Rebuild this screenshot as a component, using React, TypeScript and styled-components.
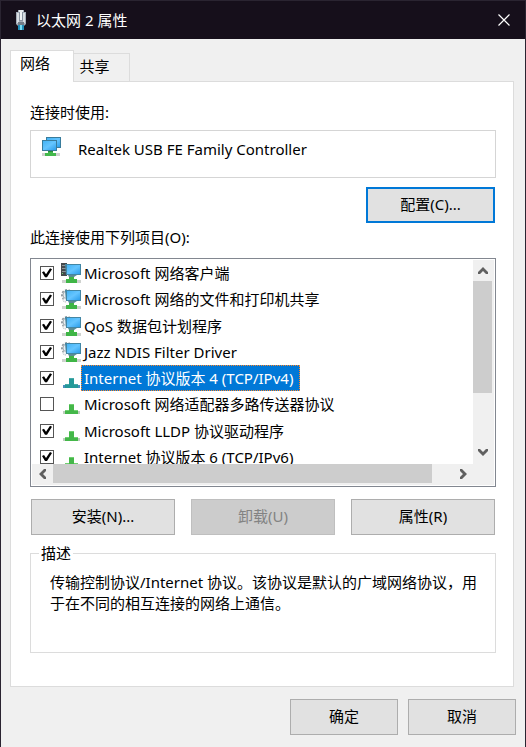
import { useState } from 'react';
import styled, { createGlobalStyle, css } from 'styled-components';

const GlobalStyle = createGlobalStyle`
  *, *::before, *::after { box-sizing: border-box; }
  body { margin: 0; background: #f0f0f0; }
  body, button, input {
    font-family: "Noto Sans", "Noto Sans CJK SC", sans-serif;
    font-size: 15px;
    line-height: 21px;
    color: #000;
  }
`;

const Dialog = styled.main`
  display: flex;
  flex-direction: column;
  min-height: 100vh;
  background: #f0f0f0;
  border: 1px solid #2a2431;
  border-width: 1px 1px 0;
`;

const TitleBar = styled.header`
  display: flex;
  align-items: center;
  height: 38px;
  padding-left: 13px;
  gap: 8px;
  background: #160f1b;
  color: #fff;
`;

const Title = styled.h1`
  flex: 1;
  margin: 0;
  font-size: 15px;
  font-weight: 400;
`;

const CloseButton = styled.button`
  display: flex;
  align-items: center;
  justify-content: center;
  width: 42px;
  height: 38px;
  padding: 0;
  border: 0;
  background: transparent;
`;

const Content = styled.div`
  flex: 1;
  display: flex;
  flex-direction: column;
  padding: 11px 9px 12px;
`;

const TabList = styled.div`
  display: flex;
  align-items: flex-end;
`;

const Tab = styled.button<{ $active: boolean }>`
  border: 1px solid #dcdcdc;
  padding: 0 0 3px;
  background: #f0f0f0;
  width: 56px;
  height: 28px;
  ${(p) =>
    p.$active
      ? css`
          width: 64px;
          height: 32px;
          margin-bottom: -1px;
          padding: 0 14px 6px 0;
          background: #fff;
          border-bottom: 0;
          z-index: 1;
        `
      : css`
          border-left: 0;
          border-bottom: 0;
          padding-right: 14px;
        `}
`;

const Panel = styled.section`
  flex: 1;
  display: flex;
  flex-direction: column;
  margin-right: 2px;
  padding: 20px 17px 33px 19px;
  background: #fff;
  border: 1px solid #dcdcdc;
`;

const Caption = styled.h2`
  margin: 0;
  font-size: 15px;
  font-weight: 400;
`;

const Adapter = styled.div`
  display: flex;
  align-items: flex-start;
  gap: 15px;
  height: 48px;
  margin-top: 7px;
  padding: 6px 10px;
  border: 1px solid #d5d5d5;
`;

const AdapterName = styled.span`
  padding-top: 2px;
`;

const PushButton = styled.button<{ $focused?: boolean }>`
  height: 36px;
  padding: 0 8px 2px;
  border: 1px solid #adadad;
  background: #e1e1e1;
  ${(p) => p.$focused && css`border: 2px solid #0078d7;`}
  &:disabled {
    border-color: #bfbfbf;
    background: #cccccc;
    color: #838383;
  }
`;

const ConfigureRow = styled.div`
  display: flex;
  justify-content: flex-end;
  margin: 9px 1px 4px 0;
  ${PushButton} { width: 129px; }
`;

const ListBox = styled.div`
  display: grid;
  grid-template-columns: 1fr 21px;
  grid-template-rows: 204px 21px;
  margin-top: 10px;
  padding: 1px;
  border: 1px solid #828790;
`;

const Items = styled.ul`
  display: grid;
  grid-auto-rows: 1fr;
  height: 210px;
  margin: 0;
  padding: 0 0 0 8px;
  list-style: none;
`;

const Viewport = styled.div`
  overflow: hidden;
`;

const Item = styled.li`
  display: flex;
  align-items: center;
`;

const ItemLabel = styled.label`
  display: flex;
  align-items: center;
`;

const CheckBox = styled.input`
  appearance: none;
  width: 14px;
  height: 14px;
  margin: 0 7px 0 0;
  border: 1px solid #555;
  background: #fff;
  &:checked::before {
    content: "";
    display: block;
    width: 12px;
    height: 12px;
    background: #000;
    clip-path: polygon(1px 5px, 3px 4px, 5px 7px, 9px 1px, 11px 2px, 6px 10px, 4px 10px);
  }
`;

const ItemText = styled.span<{ $selected: boolean }>`
  height: 26px;
  padding: 1px 6px 1px 2px;
  border: 1px dotted transparent;
  line-height: 22px;
  white-space: nowrap;
  ${(p) =>
    p.$selected &&
    css`
      background: #0078d7;
      border-color: #ff8728;
      color: #fff;
    `}
`;

const ScrollColumn = styled.div`
  display: flex;
  flex-direction: column;
  padding: 0 2px 2px 0;
  background: #f0f0f0;
`;

const ScrollRow = styled.div`
  grid-column: 1 / -1;
  display: flex;
  padding-right: 21px;
  padding-bottom: 2px;
  background: #f0f0f0;
`;

const ScrollButton = styled.button`
  display: flex;
  align-items: center;
  justify-content: center;
  flex: 0 0 21px;
  padding: 0;
  border: 0;
  background: #f0f0f0;
`;

const Track = styled.div<{ $vertical?: boolean }>`
  flex: 1;
  display: flex;
  flex-direction: ${(p) => (p.$vertical ? 'column' : 'row')};
`;

const Thumb = styled.div<{ $share: number }>`
  flex: 0 0 ${(p) => p.$share}%;
  background: #cdcdcd;
`;

const Actions = styled.div`
  display: grid;
  grid-template-columns: repeat(3, 1fr);
  gap: 16px;
  margin: 12px 1px 0;
`;

const Description = styled.fieldset`
  flex: 1;
  margin: 8px 0 0;
  padding: 8px 16px 30px 19px;
  border: 1px solid #dcdcdc;
  min-width: 0;
`;

const Legend = styled.legend`
  margin-left: -11px;
  padding: 0 2px;
`;

const DescriptionText = styled.p`
  margin: 0;
`;

const Footer = styled.footer`
  display: flex;
  justify-content: flex-end;
  gap: 10px;
  margin-top: 12px;
  ${PushButton} { width: 108px; }
`;

function PlugIcon() {
  return (
    <svg width="14" height="22" viewBox="0 0 14 22" aria-hidden="true">
      <path d="M4 1h6v2h2v12l-2 2H4l-2-2V3h2z" fill="#a4adb8" />
      <path d="M3 4h2v10H3zM9 4h2v10H9z" fill="#d8dde2" />
      <path d="M5 1h4v2H5z" fill="#e8ebee" />
      <path d="M5 3h4v9H5z" fill="#8993a0" />
      <path d="M6 3h2v8H6z" fill="#f1f4f6" />
      <path d="M4 13h6v3H4z" fill="#737d89" />
      <path d="M4 16h6v5H4z" fill="#218db8" />
      <path d="M6 16h2v5H6z" fill="#7bdcf3" />
    </svg>
  );
}

function AdapterIcon() {
  return (
    <svg width="22" height="21" viewBox="0 0 22 21" aria-hidden="true">
      <defs>
        <linearGradient id="screen" x1="0" y1="0" x2="1" y2="1">
          <stop offset="0" stopColor="#43b3f5" />
          <stop offset="0.5" stopColor="#65c5ff" />
          <stop offset="1" stopColor="#2c9eeb" />
        </linearGradient>
      </defs>
      <path d="M5 0h15v11H5z" fill="#397c9c" />
      <path d="M6 1h13v9H6z" fill="url(#screen)" />
      <path d="M1 16h18v3H1z" fill="#cfcfcf" />
      <path d="M7 13h5v3h3v3H4v-3h3z" fill="#43b84b" />
      <path d="M1 3h15v11H1z" fill="#397c9c" />
      <path d="M2 4h13v9H2z" fill="url(#screen)" />
      <path d="M7 14h5v1H7z" fill="#2a8c3c" />
    </svg>
  );
}

type IconKind = 'client' | 'service' | 'protocol';

function ItemIcon({ kind, selected }: { kind: IconKind; selected: boolean }) {
  if (kind === 'protocol') {
    return (
      <svg width="20" height="22" viewBox="0 0 20 22" aria-hidden="true">
        <path d="M2 18h17v3H2z" fill={selected ? '#4a8fbd' : '#bfcdbf'} />
        <path d="M8 11h5v6h4v4H4v-4h4z" fill={selected ? '#259999' : '#44b749'} />
        <path d="M8 11h5v1H8zM4 17h4v1H4zM13 17h4v1h-4z" fill={selected ? '#47aaa8' : '#70cf70'} />
      </svg>
    );
  }
  return (
    <svg width="20" height="22" viewBox="0 0 20 22" aria-hidden="true">
      {kind === 'client' ? (
        <>
          <path d="M0 1h6v13H0z" fill="#454a4d" />
          <path d="M1 3h4v1H1zM1 6h4v1H1zM1 9h4v1H1z" fill="#8d9497" />
          <path d="M1 11h1v1H1z" fill="#6bd36b" />
        </>
      ) : (
        <>
          <circle cx="6" cy="7" r="5" fill="#dce1e4" stroke="#8d979d" strokeWidth="2" strokeDasharray="2 1.5" />
          <circle cx="6" cy="7" r="4" fill="#e9edef" stroke="#a8b1b6" />
          <circle cx="4" cy="12" r="2" fill="#f4f5f6" stroke="#a0a9ae" strokeDasharray="1 1" />
        </>
      )}
      <path d="M1 18h19v3H1z" fill="#cfd2cf" />
      <path d="M8 13h5v4h3v4H5v-4h3z" fill="#3fb546" />
      <path d="M4 2h16v11H5z" fill="#4386a4" />
      <path d="M6 3h13v9H6z" fill="url(#screen)" />
      <path d="M7 13h9l-3 2H8z" fill="#5b8c94" />
    </svg>
  );
}

const arrows = {
  up: 'M1 8V6l5-5 5 5v2L9 8 6 5 3 8z',
  down: 'M1 2v2l5 5 5-5V2L9 2 6 5 3 2z',
  left: 'M9 0H7L2 5l5 5h2V8L6 5l3-3z',
  right: 'M3 0h2l5 5-5 5H3V8l3-3-3-3z',
};

function Arrow({ to }: { to: keyof typeof arrows }) {
  return (
    <svg width="12" height="10" viewBox="0 0 12 10" aria-hidden="true">
      <path d={arrows[to]} fill="#606060" />
    </svg>
  );
}

const initialItems: { name: string; kind: IconKind; checked: boolean }[] = [
  { name: 'Microsoft 网络客户端', kind: 'client', checked: true },
  { name: 'Microsoft 网络的文件和打印机共享', kind: 'service', checked: true },
  { name: 'QoS 数据包计划程序', kind: 'service', checked: true },
  { name: 'Jazz NDIS Filter Driver', kind: 'service', checked: true },
  { name: 'Internet 协议版本 4 (TCP/IPv4)', kind: 'protocol', checked: true },
  { name: 'Microsoft 网络适配器多路传送器协议', kind: 'protocol', checked: false },
  { name: 'Microsoft LLDP 协议驱动程序', kind: 'protocol', checked: true },
  { name: 'Internet 协议版本 6 (TCP/IPv6)', kind: 'protocol', checked: true },
];

export default function App() {
  const [items, setItems] = useState(initialItems);
  const [selected, setSelected] = useState(4);

  const toggle = (index: number) => {
    setItems(items.map((item, i) => (i === index ? { ...item, checked: !item.checked } : item)));
    setSelected(index);
  };

  return (
    <>
      <GlobalStyle />
      <Dialog>
        <TitleBar>
          <PlugIcon />
          <Title>以太网 2 属性</Title>
          <CloseButton aria-label="关闭">
            <svg width="12" height="12" viewBox="0 0 12 12" aria-hidden="true">
              <path d="M.5 .5l11 11M11.5 .5l-11 11" stroke="#fff" strokeWidth="1.2" />
            </svg>
          </CloseButton>
        </TitleBar>
        <Content>
          <TabList role="tablist">
            <Tab role="tab" aria-selected="true" $active>网络</Tab>
            <Tab role="tab" aria-selected="false" $active={false}>共享</Tab>
          </TabList>
          <Panel role="tabpanel">
            <Caption>连接时使用:</Caption>
            <Adapter>
              <AdapterIcon />
              <AdapterName>Realtek USB FE Family Controller</AdapterName>
            </Adapter>
            <ConfigureRow>
              <PushButton $focused>配置(C)...</PushButton>
            </ConfigureRow>
            <Caption>此连接使用下列项目(O):</Caption>
            <ListBox>
              <Viewport>
                <Items>
                  {items.map((item, i) => (
                    <Item key={item.name}>
                      <ItemLabel>
                        <CheckBox type="checkbox" checked={item.checked} onChange={() => toggle(i)} />
                        <ItemIcon kind={item.kind} selected={i === selected} />
                        <ItemText $selected={i === selected}>{item.name}</ItemText>
                      </ItemLabel>
                    </Item>
                  ))}
                </Items>
              </Viewport>
              <ScrollColumn>
                <ScrollButton aria-label="向上滚动"><Arrow to="up" /></ScrollButton>
                <Track $vertical><Thumb $share={70} /></Track>
                <ScrollButton aria-label="向下滚动"><Arrow to="down" /></ScrollButton>
              </ScrollColumn>
              <ScrollRow>
                <ScrollButton aria-label="向左滚动"><Arrow to="left" /></ScrollButton>
                <Track><Thumb $share={95} /></Track>
                <ScrollButton aria-label="向右滚动"><Arrow to="right" /></ScrollButton>
              </ScrollRow>
            </ListBox>
            <Actions>
              <PushButton>安装(N)...</PushButton>
              <PushButton disabled>卸载(U)</PushButton>
              <PushButton>属性(R)</PushButton>
            </Actions>
            <Description>
              <Legend>描述</Legend>
              <DescriptionText>
                传输控制协议/Internet 协议。该协议是默认的广域网络协议，用于在不同的相互连接的网络上通信。
              </DescriptionText>
            </Description>
          </Panel>
          <Footer>
            <PushButton>确定</PushButton>
            <PushButton>取消</PushButton>
          </Footer>
        </Content>
      </Dialog>
    </>
  );
}
